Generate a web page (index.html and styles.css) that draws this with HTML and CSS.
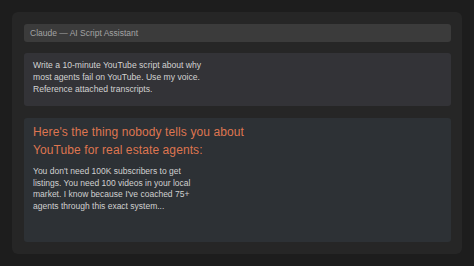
FILE: index.html
```html
<!DOCTYPE html>
<html>
<head>
<meta charset="utf-8">
<link rel="stylesheet" href="styles.css">
</head>
<body>
<div class="panel">
  <div class="titlebar">Claude — AI Script Assistant</div>
  <div class="prompt">Write a 10-minute YouTube script about why<br>most agents fail on YouTube. Use my voice.<br>Reference attached transcripts.</div>
  <div class="response">
    <div class="heading">Here's the thing nobody tells you about<br>YouTube for real estate agents:</div>
    <div class="body">You don't need 100K subscribers to get<br>listings. You need 100 videos in your local<br>market. I know because I've coached 75+<br>agents through this exact system...</div>
  </div>
</div>
</body>
</html>
```
FILE: styles.css
```css
html, body { margin: 0; padding: 0; }
body {
  width: 474px; height: 266px;
  background: #1d1d1d;
  font-family: "Liberation Sans", Arial, sans-serif;
  padding: 12px;
  box-sizing: border-box;
}
.panel {
  width: 450px; height: 242px;
  background: #262626;
  border-radius: 6px;
  padding: 12px 11px 12px 12px;
  box-sizing: border-box;
  display: flex; flex-direction: column;
}
.titlebar {
  height: 18px;
  background: #3b3b3b;
  border-radius: 3px;
  color: #a3a3a3;
  font-size: 8.5px;
  line-height: 18px;
  padding-left: 6px;
}
.prompt {
  margin-top: 11px;
  height: 53px;
  box-sizing: border-box;
  background: #333337;
  border-radius: 3px;
  padding: 6px 9px;
  color: #d2d2d2;
  font-size: 8.6px;
  line-height: 12px;
}
.response {
  margin-top: 12px;
  flex: 1;
  background: #2d3135;
  border-radius: 3px;
  padding: 5px 9px;
}
.heading {
  color: #de7550;
  font-size: 12px;
  letter-spacing: 0.1px;
  line-height: 18px;
}
.body {
  margin-top: 7px;
  color: #d0d0d0;
  font-size: 8.5px;
  line-height: 11.7px;
}
```
